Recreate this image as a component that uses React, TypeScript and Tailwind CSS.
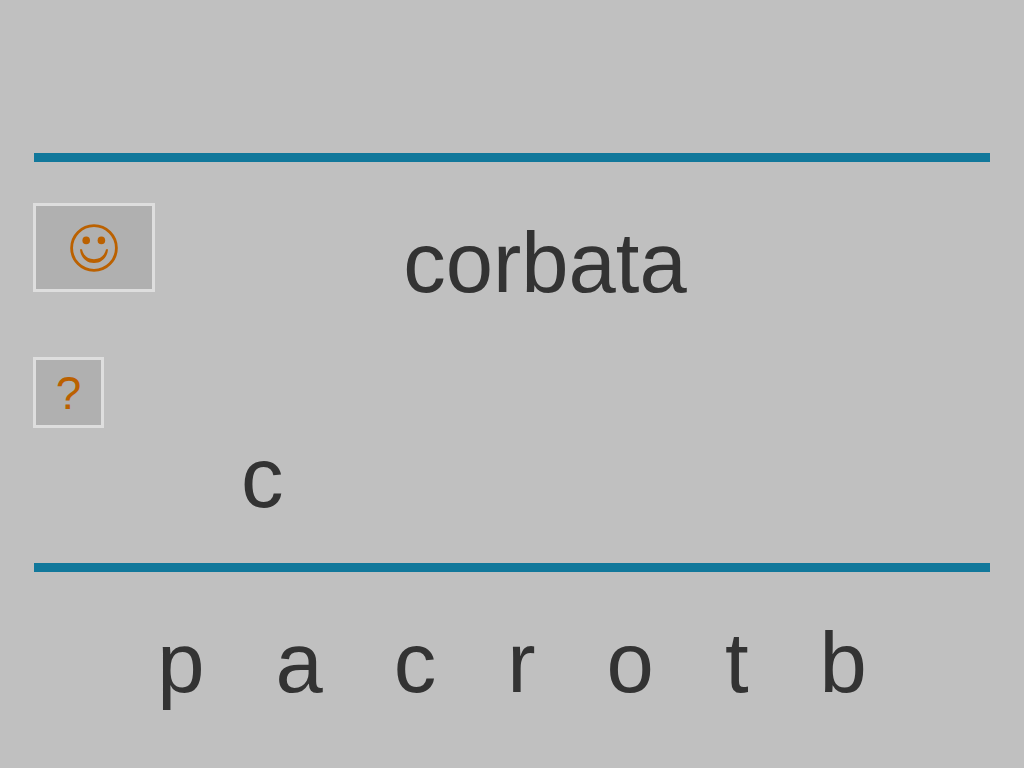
import { useState } from "react";

const word = "corbata";
const letters = ["p", "a", "c", "r", "o", "t", "b"];

function Rule() {
  return <hr className="mx-px h-[9px] border-0 bg-[#11789b]" />;
}

function SmileyIcon() {
  return (
    <svg viewBox="0 0 48 48" className="h-12 w-12" aria-hidden="true">
      <circle
        cx="24"
        cy="24"
        r="22.4"
        fill="none"
        stroke="currentColor"
        strokeWidth="2.8"
      />
      <circle cx="16.2" cy="16.4" r="3.8" fill="currentColor" />
      <circle cx="31.4" cy="16.4" r="3.8" fill="currentColor" />
      {/* Mouth: thick in the middle, thin at the corners */}
      <path
        d="M10 25.2 H12 C13.4 31.8 18 35.2 24 35.2 C30 35.2 34.6 31.8 36 25.2 H38 C37.4 33.6 31.6 39 24 39 C16.4 39 10.6 33.6 10 25.2 Z"
        fill="currentColor"
      />
    </svg>
  );
}

export default function App() {
  const [answer, setAnswer] = useState("c");

  return (
    <div className="min-h-screen bg-[#c0c0c0] px-[33px] pt-[153px] font-['Liberation_Sans',Arial,sans-serif] text-[85px] leading-[85px] text-[#333333]">
      <Rule />

      <main className="flex min-h-[401px]">
        <div className="flex flex-col items-start gap-[65px] pt-[41px]">
          <button
            type="button"
            aria-label="Check"
            className="flex h-[89px] w-[122px] items-center justify-center border-3 border-[#dedede] bg-[#b0b0b0] text-[#bb6100]"
          >
            <SmileyIcon />
          </button>
          <button
            type="button"
            className="flex h-[71px] w-[71px] items-center justify-center border-3 border-[#dedede] bg-[#b0b0b0] text-[46px] leading-none text-[#bb6100]"
          >
            ?
          </button>
        </div>

        <div className="flex flex-1 flex-col gap-[130px] pt-[58px] pr-[56px]">
          <h1 className="text-center">{word}</h1>
          <output className="block min-h-[85px] pl-[86px]">{answer}</output>
        </div>
      </main>

      <Rule />

      <div className="flex justify-center gap-[71px] pt-12 pb-8">
        {letters.map((letter) => (
          <button
            key={letter}
            type="button"
            onClick={() => setAnswer(answer + letter)}
          >
            {letter}
          </button>
        ))}
      </div>
    </div>
  );
}
